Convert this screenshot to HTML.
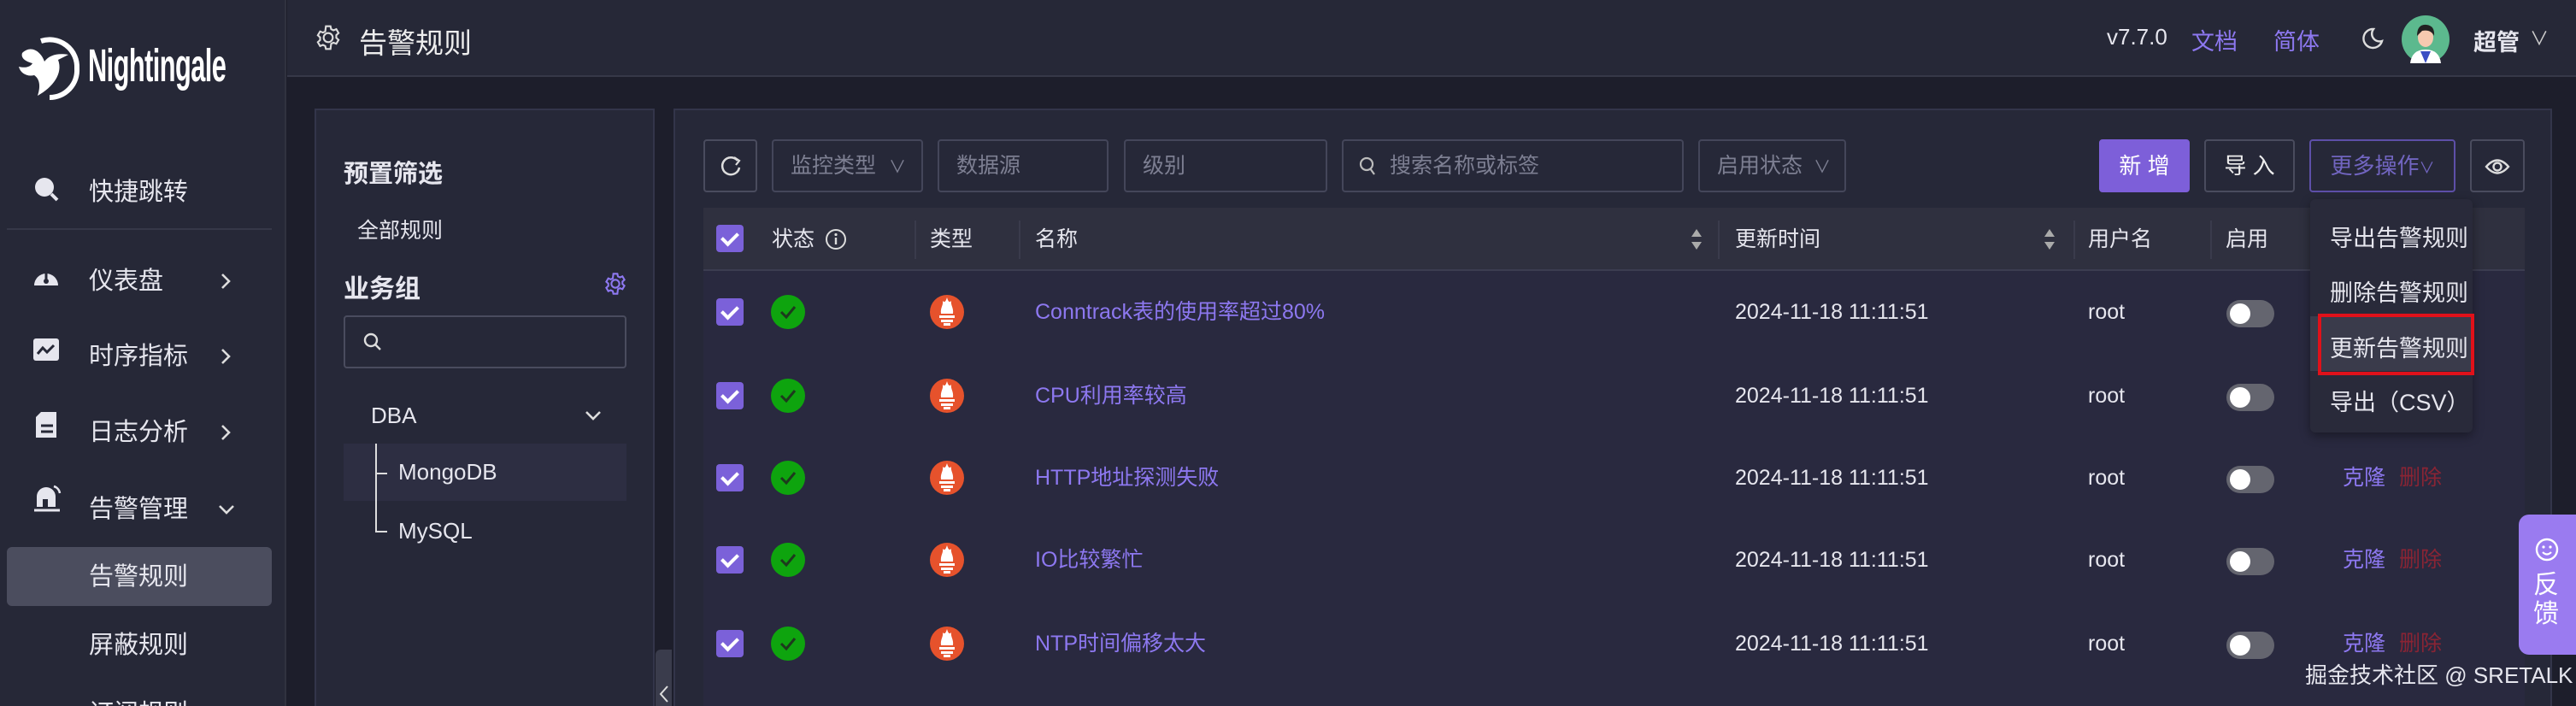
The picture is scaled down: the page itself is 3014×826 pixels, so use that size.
<!DOCTYPE html>
<html><head><meta charset="utf-8"><style>
*{box-sizing:border-box;margin:0;padding:0}
html,body{background:#1d1e2b;width:3014px;height:826px;overflow:hidden}
#root{position:relative;width:3014px;height:826px;overflow:hidden;background:#1d1e2b;font-family:"Liberation Sans","Noto Sans CJK SC",sans-serif;color:#e6e6ee}
.a{position:absolute}
.side{left:0;top:0;width:335px;height:826px;background:#262837;border-right:2px solid #30323f}
.hdr{left:336px;top:0;width:2678px;height:90px;background:#262837;border-bottom:2px solid #363848}
.mi{position:absolute;left:104px;font-size:29px;color:#e6e6ee;line-height:40px}
.chev{position:absolute;left:256px}
.panel{background:#262838;border:2px solid #33354a}
.box{position:absolute;top:163px;height:62px;border:2px solid #44465a;border-radius:4px;color:#7d7f92;font-size:25px;line-height:58px;padding-left:20px}
.th{position:absolute;top:265px;font-size:25px;color:#e6e6ee;line-height:30px}
.dv{position:absolute;top:258px;width:2px;height:45px;background:#3a3b4c}
.cb{position:absolute;width:32px;height:32px;background:#7b61d9;border-radius:4px}
.cb:after{content:"";position:absolute;left:10px;top:5px;width:8px;height:15px;border:solid #fff;border-width:0 4px 4px 0;transform:rotate(45deg)}
.row{position:absolute;left:823px;width:2131px;background:#29293f}
.t{position:absolute;font-size:25px;line-height:30px}
.nm{color:#8d78f0}
.tg{position:absolute;width:56px;height:32px;border-radius:16px;background:#64656f}
.tg:after{content:"";position:absolute;left:4px;top:4px;width:24px;height:24px;border-radius:12px;background:#fff}
.btn{position:absolute;top:163px;height:62px;border:2px solid #4a4c5e;border-radius:4px;font-size:26px;line-height:58px;text-align:center}
.dd{font-size:27px;position:absolute;left:2726px;color:#e6e6ee}
</style></head><body><div id="root">
<div class="a side"></div>
<!-- logo -->
<svg class="a" style="left:18px;top:42px" width="76" height="76" viewBox="0 0 76 76">
<path d="M30 6 A32 32 0 0 1 72 38 A32 32 0 0 1 40 72" fill="none" stroke="#fff" stroke-width="6"/>
<path d="M8 20 C18 10 30 18 34 30 C40 22 50 20 62 22 L50 28 C56 44 44 60 26 70 C30 58 28 50 22 46 C14 48 6 44 4 36 C12 38 18 36 20 32 C12 30 6 26 8 20Z" fill="#fff"/>
</svg>
<div class="a" style="left:103px;top:46px;font-size:54px;font-weight:bold;color:#fff;transform:scaleX(.57);transform-origin:left;letter-spacing:-1px">Nightingale</div>
<!-- menu -->
<svg class="a" style="left:38px;top:205px" width="32" height="32"><circle cx="14" cy="14" r="11" fill="#e6e6ee"/><path d="M22 22 L29 29" stroke="#e6e6ee" stroke-width="4"/></svg>
<div class="mi" style="top:205px">快捷跳转</div>
<div class="a" style="left:8px;top:267px;width:310px;height:2px;background:#363848"></div>
<svg class="a" style="left:38px;top:306px" width="32" height="32"><path d="M2 28 A14 14 0 1 1 30 28Z" fill="#e6e6ee"/><path d="M16 10v12" stroke="#262837" stroke-width="3"/><circle cx="16" cy="23" r="3" fill="#262837"/></svg>
<div class="mi" style="top:309px">仪表盘</div>
<svg class="a chev" style="top:318px" width="16" height="22"><path d="M4 3l8 8-8 8" fill="none" stroke="#ddd" stroke-width="2.6"/></svg>
<svg class="a" style="left:38px;top:393px" width="32" height="32"><rect x="1" y="3" width="30" height="26" rx="3" fill="#e6e6ee"/><path d="M6 21 L12 14 L17 19 L25 11" stroke="#262837" stroke-width="3" fill="none"/></svg>
<div class="mi" style="top:397px">时序指标</div>
<svg class="a chev" style="top:406px" width="16" height="22"><path d="M4 3l8 8-8 8" fill="none" stroke="#ddd" stroke-width="2.6"/></svg>
<svg class="a" style="left:40px;top:480px" width="30" height="34"><path d="M8 2 H26 V32 H2 V8Z" fill="#e6e6ee"/><path d="M8 18h14M8 25h14" stroke="#262837" stroke-width="3"/></svg>
<div class="mi" style="top:486px">日志分析</div>
<svg class="a chev" style="top:495px" width="16" height="22"><path d="M4 3l8 8-8 8" fill="none" stroke="#ddd" stroke-width="2.6"/></svg>
<svg class="a" style="left:38px;top:565px" width="34" height="34"><path d="M5 28 V16 A11 11 0 0 1 27 16 V28Z" fill="#e6e6ee"/><path d="M2 32h30" stroke="#e6e6ee" stroke-width="3"/><path d="M25 4 A10 10 0 0 1 32 12" stroke="#e6e6ee" stroke-width="2.5" fill="none"/><rect x="12" y="19" width="6" height="9" fill="#262837"/></svg>
<div class="mi" style="top:576px">告警管理</div>
<svg class="a" style="left:254px;top:588px" width="22" height="16"><path d="M3 4l8 8 8-8" fill="none" stroke="#ddd" stroke-width="2.6"/></svg>
<div class="a" style="left:8px;top:640px;width:310px;height:69px;background:#4b4d5e;border-radius:6px"></div>
<div class="mi" style="top:655px">告警规则</div>
<div class="mi" style="top:735px">屏蔽规则</div>
<div class="mi" style="top:815px">订阅规则</div>
<!-- header -->
<div class="a hdr"></div>
<svg class="a" style="left:368px;top:28px" width="32" height="32" viewBox="0 0 24 24"><path d="M12 8a4 4 0 1 0 0 8a4 4 0 1 0 0-8zM10 2h4l.6 2.6 2 1 2.5-1 2 3.4-2 1.8v2.4l2 1.8-2 3.4-2.5-1-2 1L14 22h-4l-.6-2.6-2-1-2.5 1-2-3.4 2-1.8v-2.4l-2-1.8 2-3.4 2.5 1 2-1z" fill="none" stroke="#ddd" stroke-width="1.6"/></svg>
<div class="a" style="left:420px;top:24px;font-size:33px;color:#eee">告警规则</div>
<div class="a" style="left:2465px;top:28px;font-size:26px">v7.7.0</div>
<div class="a" style="left:2564px;top:27px;font-size:27px;color:#8d78f0">文档</div>
<div class="a" style="left:2660px;top:27px;font-size:27px;color:#8d78f0">简体</div>
<svg class="a" style="left:2763px;top:32px" width="26" height="26"><path d="M14 2 A11 11 0 1 0 24 16 A9 9 0 0 1 14 2Z" fill="none" stroke="#ddd" stroke-width="2.4"/></svg>
<svg class="a" style="left:2810px;top:18px" width="56" height="56"><circle cx="28" cy="28" r="28" fill="#5cb98e"/><path d="M10 56 Q12 40 28 40 Q44 40 46 56Z" fill="#fff"/><path d="M22 42 L28 56 L34 42Z" fill="#3b4fc4"/><ellipse cx="28" cy="26" rx="9" ry="11" fill="#f6c9b0"/><path d="M18 24 Q18 10 29 11 Q39 12 38 24 Q34 16 24 18Z" fill="#222"/></svg>
<div class="a" style="left:2894px;top:28px;font-size:27px;font-weight:bold">超管</div>
<div class="a" style="left:2960px;top:28px;font-size:22px;color:#ccc">∨</div>
<!-- left panel -->
<div class="a panel" style="left:368px;top:127px;width:398px;height:760px"></div>
<div class="a" style="left:402px;top:180px;font-size:29px;font-weight:bold">预置筛选</div>
<div class="a" style="left:418px;top:250px;font-size:25px">全部规则</div>
<div class="a" style="left:402px;top:313px;font-size:30px;font-weight:bold">业务组</div>
<svg class="a" style="left:706px;top:318px" width="28" height="28" viewBox="0 0 24 24"><path d="M12 8a4 4 0 1 0 0 8a4 4 0 1 0 0-8zM10 2h4l.6 2.6 2 1 2.5-1 2 3.4-2 1.8v2.4l2 1.8-2 3.4-2.5-1-2 1L14 22h-4l-.6-2.6-2-1-2.5 1-2-3.4 2-1.8v-2.4l-2-1.8 2-3.4 2.5 1 2-1z" fill="none" stroke="#8d78f0" stroke-width="1.8"/></svg>
<div class="a" style="left:402px;top:369px;width:331px;height:62px;border:2px solid #4a4c5e;border-radius:4px"></div>
<svg class="a" style="left:424px;top:388px" width="24" height="24"><circle cx="10" cy="10" r="7" fill="none" stroke="#ddd" stroke-width="2.4"/><path d="M15 15l6 6" stroke="#ddd" stroke-width="2.4"/></svg>
<div class="a" style="left:434px;top:471px;font-size:26px">DBA</div>
<svg class="a" style="left:683px;top:478px" width="22" height="16"><path d="M3 4l8 8 8-8" fill="none" stroke="#ddd" stroke-width="2.6"/></svg>
<div class="a" style="left:402px;top:519px;width:331px;height:67px;background:#2d2e42"></div>
<div class="a" style="left:439px;top:519px;width:2px;height:104px;background:#ddd"></div>
<div class="a" style="left:439px;top:553px;width:14px;height:2px;background:#ddd"></div>
<div class="a" style="left:439px;top:621px;width:14px;height:2px;background:#ddd"></div>
<div class="a" style="left:466px;top:537px;font-size:26px">MongoDB</div>
<div class="a" style="left:466px;top:606px;font-size:26px">MySQL</div>
<div class="a" style="left:767px;top:760px;width:19px;height:90px;background:#3a3c4c;border-radius:6px 0 0 6px"></div>
<svg class="a" style="left:770px;top:800px" width="14" height="24"><path d="M11 3l-8 9 8 9" fill="none" stroke="#ddd" stroke-width="2"/></svg>
<!-- right panel -->
<div class="a panel" style="left:788px;top:127px;width:2198px;height:760px"></div>
<div class="btn" style="left:823px;width:63px"><svg width="28" height="28" style="margin-top:15px"><path d="M22 8 A10 10 0 1 0 24 16" fill="none" stroke="#ddd" stroke-width="2.5"/><path d="M18 4 L24 8 L20 13" fill="none" stroke="#ddd" stroke-width="2.2"/></svg></div>
<div class="box" style="left:903px;width:177px">监控类型 <span style="font-size:20px;margin-left:8px">∨</span></div>
<div class="box" style="left:1097px;width:200px">数据源</div>
<div class="box" style="left:1315px;width:238px">级别</div>
<div class="box" style="left:1570px;width:400px;padding-left:54px">搜索名称或标签</div>
<svg class="a" style="left:1590px;top:183px" width="22" height="24"><circle cx="9" cy="9" r="7" fill="none" stroke="#bbb" stroke-width="2.2"/><path d="M13 14l5 7" stroke="#bbb" stroke-width="2.2"/></svg>
<div class="box" style="left:1987px;width:173px">启用状态 <span style="font-size:20px;margin-left:6px">∨</span></div>
<div class="btn" style="left:2456px;width:106px;background:#7d5fd9;border-color:#7d5fd9;color:#fff">新 增</div>
<div class="btn" style="left:2579px;width:106px;color:#eee">导 入</div>
<div class="btn" style="left:2702px;width:171px;border-color:#5d4fa8;color:#7165c0">更多操作<span style="font-size:18px">∨</span></div>
<div class="btn" style="left:2890px;width:64px"><svg width="30" height="22" style="margin-top:19px"><path d="M2 11 Q15 -4 28 11 Q15 26 2 11Z" fill="none" stroke="#ddd" stroke-width="2.4"/><circle cx="15" cy="11" r="4.5" fill="none" stroke="#ddd" stroke-width="2.4"/></svg></div>
<!-- table header -->
<div class="a" style="left:823px;top:243px;width:2131px;height:74px;background:#2f303f;border-bottom:2px solid #3c3d50"></div>
<div class="cb" style="left:838px;top:263px"></div>
<div class="th" style="left:903px">状态</div>
<svg class="a" style="left:965px;top:267px" width="26" height="26"><circle cx="13" cy="13" r="11" fill="none" stroke="#ddd" stroke-width="2"/><path d="M13 11v8" stroke="#ddd" stroke-width="2.4"/><circle cx="13" cy="7.5" r="1.6" fill="#ddd"/></svg>
<div class="dv" style="left:1070px"></div><div class="th" style="left:1088px">类型</div>
<div class="dv" style="left:1192px"></div><div class="th" style="left:1211px">名称</div>
<svg class="a" style="left:1978px;top:266px" width="14" height="28"><path d="M7 2l6 9H1z M7 26l6-9H1z" fill="#aaa"/></svg>
<div class="dv" style="left:2010px"></div><div class="th" style="left:2030px">更新时间</div>
<svg class="a" style="left:2391px;top:266px" width="14" height="28"><path d="M7 2l6 9H1z M7 26l6-9H1z" fill="#aaa"/></svg>
<div class="dv" style="left:2426px"></div><div class="th" style="left:2443px">用户名</div>
<div class="dv" style="left:2586px"></div><div class="th" style="left:2604px">启用</div>
<!-- rows -->
<div class="row" style="top:317px;height:520px"></div>
<div class="cb" style="left:838px;top:349px"></div><div class="cb" style="left:838px;top:447px"></div><div class="cb" style="left:838px;top:543px"></div><div class="cb" style="left:838px;top:639px"></div><div class="cb" style="left:838px;top:737px"></div>
<svg class="a" style="left:902px;top:345px" width="40" height="440">
<g id="g"><circle cx="20" cy="20" r="20" fill="#0ea40e"/><path d="M12 20l6 6 10-12" fill="none" stroke="#1d3a1d" stroke-width="3"/></g>
<use href="#g" y="98"/><use href="#g" y="194"/><use href="#g" y="290"/><use href="#g" y="388"/>
</svg>
<svg class="a" style="left:1088px;top:345px" width="40" height="440">
<g id="p"><circle cx="20" cy="20" r="20" fill="#e6522c"/><path d="M13 22 C12 15 16 12 15 7 C18 10 19 6 20 3 C21 6 22 10 25 7 C24 12 28 15 27 22Z" fill="#fff"/><rect x="11" y="24" width="18" height="3" fill="#fff"/><rect x="13" y="29" width="14" height="3" fill="#fff"/><rect x="16" y="33" width="8" height="3" fill="#fff"/></g>
<use href="#p" y="98"/><use href="#p" y="194"/><use href="#p" y="290"/><use href="#p" y="388"/>
</svg>
<div class="t nm" style="left:1211px;top:350px">Conntrack表的使用率超过80%</div>
<div class="t nm" style="left:1211px;top:448px">CPU利用率较高</div>
<div class="t nm" style="left:1211px;top:544px">HTTP地址探测失败</div>
<div class="t nm" style="left:1211px;top:640px">IO比较繁忙</div>
<div class="t nm" style="left:1211px;top:738px">NTP时间偏移太大</div>
<div class="t" style="left:2030px;top:350px">2024-11-18 11:11:51</div>
<div class="t" style="left:2030px;top:448px">2024-11-18 11:11:51</div>
<div class="t" style="left:2030px;top:544px">2024-11-18 11:11:51</div>
<div class="t" style="left:2030px;top:640px">2024-11-18 11:11:51</div>
<div class="t" style="left:2030px;top:738px">2024-11-18 11:11:51</div>
<div class="t" style="left:2443px;top:350px">root</div><div class="t" style="left:2443px;top:448px">root</div><div class="t" style="left:2443px;top:544px">root</div><div class="t" style="left:2443px;top:640px">root</div><div class="t" style="left:2443px;top:738px">root</div>
<div class="tg" style="left:2605px;top:351px"></div><div class="tg" style="left:2605px;top:449px"></div><div class="tg" style="left:2605px;top:545px"></div><div class="tg" style="left:2605px;top:641px"></div><div class="tg" style="left:2605px;top:739px"></div>
<div class="t" style="left:2741px;top:544px;color:#8d78f0">克隆</div><div class="t" style="left:2807px;top:544px;color:#8a2434">删除</div>
<div class="t" style="left:2741px;top:640px;color:#8d78f0">克隆</div><div class="t" style="left:2807px;top:640px;color:#8a2434">删除</div>
<div class="t" style="left:2741px;top:738px;color:#8d78f0">克隆</div><div class="t" style="left:2807px;top:738px;color:#8a2434">删除</div>
<!-- dropdown -->
<div class="a" style="left:2703px;top:233px;width:190px;height:273px;background:#292a3a;border-radius:6px;box-shadow:0 4px 12px rgba(0,0,0,.4)"></div>
<div class="a" style="left:2703px;top:370px;width:190px;height:64px;background:#3a3b4b"></div>
<div class="a" style="left:2712px;top:367px;width:183px;height:72px;border:4px solid #e0111a"></div>
<div class="dd" style="top:257px">导出告警规则</div>
<div class="dd" style="top:321px">删除告警规则</div>
<div class="dd" style="top:386px">更新告警规则</div>
<div class="dd" style="top:449px">导出（CSV）</div>
<!-- feedback -->
<div class="a" style="left:2947px;top:602px;width:80px;height:164px;background:#9a7bf0;border-radius:12px"></div>
<svg class="a" style="left:2965px;top:628px" width="30" height="30"><circle cx="15" cy="15" r="12" fill="none" stroke="#fff" stroke-width="2.4"/><circle cx="11" cy="12" r="1.6" fill="#fff"/><circle cx="19" cy="12" r="1.6" fill="#fff"/><path d="M10 18 Q15 23 20 18" fill="none" stroke="#fff" stroke-width="2.2"/></svg>
<div class="a" style="left:2964px;top:668px;font-size:30px;line-height:34px;color:#fff;width:34px">反馈</div>
<div class="a" style="left:2697px;top:770px;font-size:26px;color:#e6e6ee">掘金技术社区 @ SRETALK</div>
</div></body></html>
